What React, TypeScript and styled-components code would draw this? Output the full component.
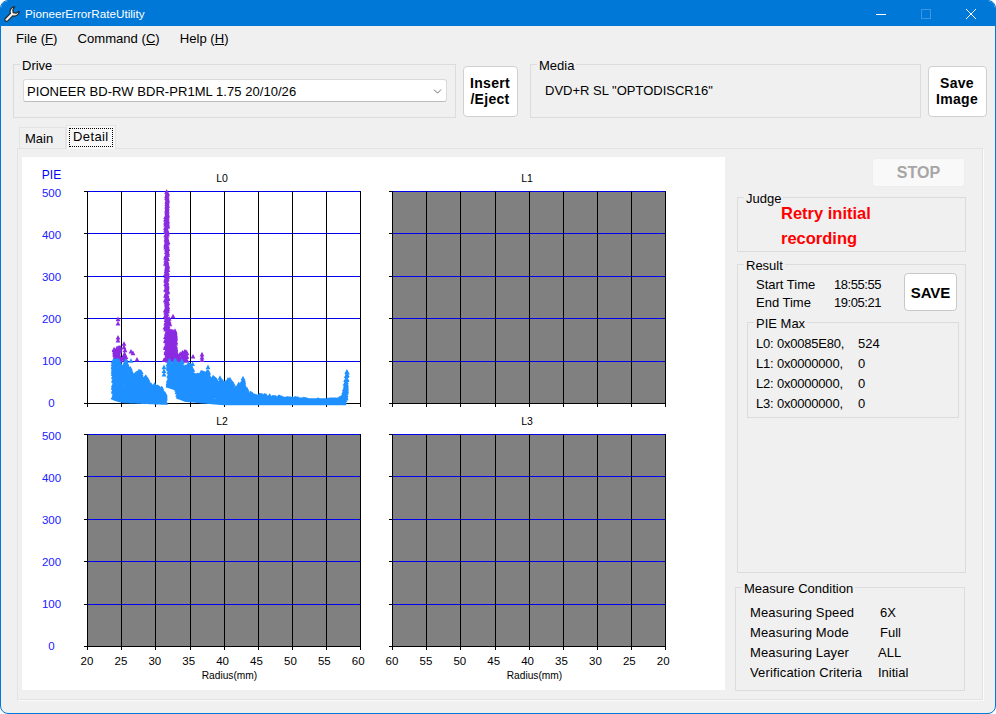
import React from 'react';
import styled, { createGlobalStyle } from 'styled-components';
import { ChevronDown } from 'lucide-react';

type Point = [number, number];

const PLOT_WIDTH = 273;
const PLOT_HEIGHT = 212;
const PLOT_Y = 23;
const V_LINES = [0, 34, 68, 103, 137, 171, 205, 239, 273];
const H_LINES = [0, 42, 85, 127, 170];
const Y_LABELS = [500, 400, 300, 200, 100, 0];
const RADIUS = [20, 25, 30, 35, 40, 45, 50, 55, 60];

// envelope of the measured values: [screen x, value]
const FIRST_HIGH: Point[] = [[113, 98], [119, 100], [122, 78], [126, 100], [129, 72], [130, 98], [133, 66], [137, 74], [147, 68], [153, 46], [163, 32], [165.5, 28]];
const FIRST_LOW: Point[] = [[113, 14], [118, 9], [125, 5], [165.5, 1]];
const SECOND_HIGH: Point[] = [[168, 100], [187, 100], [193, 90], [203, 82], [208, 78], [220, 52], [228, 58], [237, 38], [243, 58], [247, 28], [253, 21], [273, 15], [293, 11], [320, 7], [337, 8], [342, 14], [344, 36], [347, 88]];
const SECOND_LOW: Point[] = [[168, 42], [176, 36], [178, 16], [187, 8], [205, 4], [225, 0], [344, 0], [346, 14], [347, 40]];
const BLUE_EXTRA: Point[] = [[164, 85], [164, 76], [164, 68], [131, 100], [243, 54], [208, 85], [228, 56], [220, 60]];
const PURPLE_EXTRA: Point[] = [[118, 198], [118, 188], [118, 155], [118, 148], [117, 130], [119, 130], [124, 140], [124, 132], [125, 125], [131, 122], [133, 118], [137, 103], [173, 205], [193, 110], [202, 115], [202, 108], [202, 102], [164, 102], [187, 118], [185, 122]];

function lerp(table: Point[], x: number) {
  for (let i = 1; i < table.length; i += 1) {
    if (x <= table[i][0]) {
      const [x0, y0] = table[i - 1];
      const [x1, y1] = table[i];
      return y0 + ((y1 - y0) * (x - x0)) / (x1 - x0);
    }
  }
  return table[table.length - 1][1];
}

function createRandom(seed: number) {
  let s = seed;
  return () => {
    s = (s + 0x6d2b79f5) | 0;
    let t = Math.imul(s ^ (s >>> 15), 1 | s);
    t = (t + Math.imul(t ^ (t >>> 7), 61 | t)) ^ t;
    return ((t ^ (t >>> 14)) >>> 0) / 4294967296;
  };
}

function toPath(points: Point[]) {
  return points
    .map(([x, v]) => {
      const px = x - 87;
      const py = PLOT_HEIGHT - (Math.min(v, 500) / 500) * PLOT_HEIGHT;
      return `M${px.toFixed(1)} ${(py - 2.4).toFixed(1)}l2.4 4.6h-4.8z`;
    })
    .join('');
}

function buildSeries() {
  const random = createRandom(16);
  const blue: Point[] = [...BLUE_EXTRA];
  const purple: Point[] = [...PURPLE_EXTRA];

  const fillLobe = (high: Point[], low: Point[], from: number, to: number) => {
    let bump = 1;
    for (let x = from; x <= to; x += 0.6) {
      if (random() < 0.3) bump = 0.72 + random() * 0.32;
      const top = Math.min(lerp(high, x) * bump, 100);
      const bottom = lerp(low, x);
      const count = Math.ceil((top - bottom) / 6) + 1;
      for (let i = 0; i < count; i += 1) {
        blue.push([x + random() * 0.6, bottom + (top - bottom) * random()]);
      }
      blue.push([x, top], [x, bottom]);
    }
  };
  fillLobe(FIRST_HIGH, FIRST_LOW, 113, 165.5);
  fillLobe(SECOND_HIGH, SECOND_LOW, 168, 347);

  // the spike at radius 31-32 mm
  for (let v = 100; v <= 500; v += 1.6) {
    const left = v > 440 ? 166.6 : v > 200 ? 165.4 : 164.8;
    const right = v > 440 ? 167.6 : v > 200 ? 168 : 170;
    purple.push([left + (right - left) * random(), v]);
  }
  for (let i = 0; i < 260; i += 1) {
    purple.push([167 + random() * 9, 100 + random() * 70]);
  }
  for (let i = 0; i < 50; i += 1) {
    purple.push([176 + random() * 11, 100 + random() * 24 * random()]);
  }
  for (let i = 0; i < 50; i += 1) {
    purple.push([114 + random() * 7, 100 + random() * 32]);
  }
  for (let i = 0; i < 16; i += 1) {
    purple.push([123 + random() * 3, 100 + random() * 16]);
  }
  return { blue: toPath(blue), purple: toPath(purple) };
}

const series = buildSeries();

type ChartProps = {
  title: string;
  plotX: number;
  width: number;
  height: number;
  showValues?: boolean;
  showRadius?: boolean;
  reversed?: boolean;
  unit?: boolean;
  data?: boolean;
};

function Chart({ title, plotX, width, height, showValues, showRadius, reversed, unit, data }: ChartProps) {
  const labels = reversed ? [...RADIUS].reverse() : RADIUS;

  return (
    <svg width={width} height={height} style={{ display: 'block' }}>
      <text x={plotX + 135} y={PLOT_Y - 9} fontSize={10.5} textAnchor="middle" fill="#000">
        {title}
      </text>
      {unit && (
        <text x={21.5} y={PLOT_Y - 12} fontSize={12} textAnchor="middle" fill="#0000ff">
          PIE
        </text>
      )}
      {showValues &&
        Y_LABELS.map((value, i) => (
          <text key={value} x={21.5} y={PLOT_Y + i * 42 + 6} fontSize={11.5} textAnchor="middle" fill="#2020ff">
            {value}
          </text>
        ))}
      <g transform={`translate(${plotX} ${PLOT_Y})`} shapeRendering="crispEdges">
        {!data && <rect width={PLOT_WIDTH} height={PLOT_HEIGHT} fill="#808080" />}
        {H_LINES.map((y) => (
          <line key={y} x1={-3} x2={PLOT_WIDTH + 1} y1={y + 0.5} y2={y + 0.5} stroke="#0000f0" />
        ))}
        {H_LINES.map((y) => (
          <line key={y} x1={-3} x2={0} y1={y + 0.5} y2={y + 0.5} stroke="#000" />
        ))}
        <line x1={-3} x2={PLOT_WIDTH + 1} y1={PLOT_HEIGHT + 0.5} y2={PLOT_HEIGHT + 0.5} stroke="#000" />
        {V_LINES.map((x) => (
          <line key={x} x1={x + 0.5} x2={x + 0.5} y1={0} y2={PLOT_HEIGHT + 4} stroke="#000" />
        ))}
      </g>
      {data && (
        <g transform={`translate(${plotX} ${PLOT_Y})`}>
          <path d={series.purple} fill="#8a2be2" />
          <path d={series.blue} fill="#1e90ff" />
        </g>
      )}
      {showRadius &&
        labels.map((value, i) => (
          <text key={value} x={plotX + i * 33.9} y={PLOT_Y + PLOT_HEIGHT + 19} fontSize={11.5} textAnchor="middle" fill="#000">
            {value}
          </text>
        ))}
      {showRadius && (
        <text x={plotX + 142.5} y={PLOT_Y + PLOT_HEIGHT + 33} fontSize={10.2} textAnchor="middle" fill="#000">
          Radius(mm)
        </text>
      )}
    </svg>
  );
}

function App() {
  return (
    <>
      <GlobalStyle />
      <Window>
        <TitleBar>
          <svg width={16} height={16} viewBox="0 0 16 16">
            <path
              d="M10.8 .8A4.8 4.8 0 0 0 6.4 7.4L1.3 12.5A1.7 1.7 0 0 0 3.7 14.9L8.8 9.8A4.8 4.8 0 0 0 15.2 5.2L12 7.2 9.2 6.6 8.8 3.8Z"
              fill="#efefef"
              stroke="#222"
              strokeWidth={1.1}
              strokeLinejoin="round"
            />
          </svg>
          <TitleText>PioneerErrorRateUtility</TitleText>
          <WindowButtons>
            <svg width={10} height={10} viewBox="0 0 10 10">
              <line x1={0} x2={10} y1={5.5} y2={5.5} stroke="#fff" />
            </svg>
            <svg width={10} height={10} viewBox="0 0 10 10">
              <rect x={0.5} y={0.5} width={9} height={9} fill="none" stroke="#3d95df" />
            </svg>
            <svg width={10} height={10} viewBox="0 0 10 10">
              <path d="M0 0L10 10M10 0L0 10" stroke="#fff" fill="none" />
            </svg>
          </WindowButtons>
        </TitleBar>

        <MenuBar>
          <MenuItem>
            File (<u>F</u>)
          </MenuItem>
          <MenuItem>
            Command (<u>C</u>)
          </MenuItem>
          <MenuItem>
            Help (<u>H</u>)
          </MenuItem>
        </MenuBar>

        <TopRow>
          <Group $width={443} $height={54}>
            <GroupLabel>Drive</GroupLabel>
            <ComboBox>
              PIONEER BD-RW BDR-PR1ML 1.75 20/10/26
              <ChevronDown size={13} color="#505050" strokeWidth={1.5} />
            </ComboBox>
          </Group>
          <CommandButton $width={55}>
            Insert
            <br />
            /Eject
          </CommandButton>
          <Group $width={391} $height={54} $left={5}>
            <GroupLabel>Media</GroupLabel>
            <MediaText>DVD+R SL "OPTODISCR16"</MediaText>
          </Group>
          <CommandButton $width={59}>
            Save
            <br />
            Image
          </CommandButton>
        </TopRow>

        <TabStrip>
          <Tab>Main</Tab>
          <ActiveTab>
            <span>Detail</span>
          </ActiveTab>
        </TabStrip>

        <TabPanel>
          <ChartPanel>
            <Chart title="L0" plotX={57} width={345} height={243} showValues unit data />
            <Chart title="L1" plotX={17} width={300} height={243} />
            <Chart title="L2" plotX={57} width={345} height={274} showValues showRadius />
            <Chart title="L3" plotX={17} width={300} height={274} showRadius reversed />
          </ChartPanel>

          <SidePanel>
            <StopButton disabled>STOP</StopButton>

            <Group $width={229} $height={55} $top={10} $self="flex-end">
              <GroupLabel>Judge</GroupLabel>
              <JudgeText>Retry initial recording</JudgeText>
            </Group>

            <Group $width={229} $height={309} $top={12} $self="flex-end">
              <GroupLabel>Result</GroupLabel>
              <ResultHead>
                <TimeList>
                  <TimeRow>
                    <TimeLabel>Start Time</TimeLabel>
                    <TimeValue>18:55:55</TimeValue>
                  </TimeRow>
                  <TimeRow>
                    <TimeLabel>End Time</TimeLabel>
                    <TimeValue>19:05:21</TimeValue>
                  </TimeRow>
                </TimeList>
                <SaveButton>SAVE</SaveButton>
              </ResultHead>
              <PieBox>
                <GroupLabel>PIE Max</GroupLabel>
                <PieRow>
                  <PieAddress>L0: 0x0085E80,</PieAddress>
                  524
                </PieRow>
                <PieRow>
                  <PieAddress>L1: 0x0000000,</PieAddress>0
                </PieRow>
                <PieRow>
                  <PieAddress>L2: 0x0000000,</PieAddress>0
                </PieRow>
                <PieRow>
                  <PieAddress>L3: 0x0000000,</PieAddress>0
                </PieRow>
              </PieBox>
            </Group>

            <Group $width={230} $height={104} $top={14} $self="flex-start">
              <GroupLabel>Measure Condition</GroupLabel>
              <ConditionList>
                <PieRow>
                  <ConditionName $width={130}>Measuring Speed</ConditionName>
                  6X
                </PieRow>
                <PieRow>
                  <ConditionName $width={130}>Measuring Mode</ConditionName>
                  Full
                </PieRow>
                <PieRow>
                  <ConditionName $width={128}>Measuring Layer</ConditionName>
                  ALL
                </PieRow>
                <PieRow>
                  <ConditionName $width={128}>Verification Criteria</ConditionName>
                  Initial
                </PieRow>
              </ConditionList>
            </Group>
          </SidePanel>
        </TabPanel>
      </Window>
    </>
  );
}

const GlobalStyle = createGlobalStyle`
  html,
  body {
    margin: 0;
    background: #fff;
  }

  body {
    font-family: 'Liberation Sans', Arial, sans-serif;
    font-size: 13px;
    color: #000;
  }

  svg text {
    font-family: 'Liberation Sans', Arial, sans-serif;
  }
`;

const Window = styled.div`
  box-sizing: border-box;
  width: 996px;
  height: 714px;
  overflow: hidden;
  border: 1px solid #0078d7;
  border-radius: 8px;
  background: #f0f0f0;
`;

const TitleBar = styled.div`
  display: flex;
  align-items: center;
  height: 25px;
  padding-left: 3px;
  background: #0078d7;
`;

const TitleText = styled.div`
  margin-left: 5px;
  font-size: 11.7px;
  color: #fff;
`;

const WindowButtons = styled.div`
  display: flex;
  gap: 35px;
  margin-left: auto;
  margin-right: 19px;
`;

const MenuBar = styled.div`
  display: flex;
  gap: 20px;
  height: 24px;
  padding-left: 15px;
  line-height: 26px;
  font-size: 13.1px;
`;

const MenuItem = styled.div``;

const TopRow = styled.div`
  display: flex;
  align-items: flex-start;
  gap: 7px;
  margin-top: 14px;
  padding-left: 12px;
`;

const Group = styled.div<{ $width: number; $height: number; $top?: number; $left?: number; $self?: string }>`
  position: relative;
  box-sizing: border-box;
  flex: none;
  width: ${({ $width }) => $width}px;
  height: ${({ $height }) => $height}px;
  margin-top: ${({ $top }) => $top ?? 0}px;
  margin-left: ${({ $left }) => $left ?? 0}px;
  align-self: ${({ $self }) => $self ?? 'auto'};
  border: 1px solid #dcdcdc;
`;

const GroupLabel = styled.div`
  position: absolute;
  top: -7px;
  left: 6px;
  padding: 0 2px;
  background: #f0f0f0;
  line-height: 15px;
  white-space: nowrap;
`;

const ComboBox = styled.div`
  box-sizing: border-box;
  display: flex;
  align-items: center;
  justify-content: space-between;
  width: 424px;
  height: 23px;
  margin: 14px 0 0 9px;
  padding: 1px 2px 0 3px;
  border: 1px solid #d9d9d9;
  border-bottom-color: #bdbdbd;
  border-radius: 3px;
  background: #fff;
  letter-spacing: 0.05px;
`;

const MediaText = styled.div`
  padding: 17px 0 0 14px;
  line-height: 18px;
`;

const CommandButton = styled.button<{ $width: number }>`
  flex: none;
  width: ${({ $width }) => $width}px;
  height: 51px;
  margin-top: 2px;
  padding: 0 1px 2px 0;
  border: 1px solid #d0d0d0;
  border-radius: 4px;
  background: #fff;
  font-family: inherit;
  font-size: 14px;
  font-weight: bold;
  letter-spacing: 0.3px;
  line-height: 16px;
  color: #000;
`;

const TabStrip = styled.div`
  display: flex;
  align-items: flex-end;
  height: 23px;
  margin: 7px 0 0 18px;
`;

const Tab = styled.div`
  box-sizing: border-box;
  width: 47px;
  height: 21px;
  padding-left: 5px;
  border: 1px solid #e3e3e3;
  border-bottom: none;
  line-height: 21px;
`;

const ActiveTab = styled.div`
  box-sizing: border-box;
  width: 50px;
  height: 24px;
  margin-bottom: -1px;
  padding: 2px;
  border: 1px solid #e3e3e3;
  border-bottom: none;
  background: #f7f7f7;

  span {
    display: block;
    box-sizing: border-box;
    height: 19px;
    padding-left: 3px;
    border: 1px dotted #000;
    letter-spacing: 0.4px;
    line-height: 16px;
  }
`;

const TabPanel = styled.div`
  box-sizing: border-box;
  display: flex;
  width: 966px;
  height: 552px;
  margin-left: 16px;
  padding: 8px 0 0 4px;
  border: 1px solid #e3e3e3;
  box-shadow: 1px 1px 0 #fafafa;
`;

const ChartPanel = styled.div`
  box-sizing: border-box;
  display: grid;
  flex: none;
  grid-template-columns: 345px 300px;
  grid-template-rows: 243px 274px;
  align-content: start;
  width: 703px;
  height: 533px;
  padding: 11px 0 0 8px;
  background: #fff;
`;

const SidePanel = styled.div`
  display: flex;
  flex-direction: column;
  width: 231px;
  margin-left: 10px;
`;

const StopButton = styled.button`
  align-self: flex-end;
  width: 93px;
  height: 29px;
  margin: 1px 1px 0 0;
  padding: 0;
  border: 1px solid #ededed;
  border-radius: 3px;
  background: #f9f9f9;
  font-family: inherit;
  font-size: 16px;
  font-weight: bold;
  color: #a6a6a6;
`;

const JudgeText = styled.div`
  width: 110px;
  padding: 3px 0 0 43px;
  font-size: 16.5px;
  font-weight: bold;
  line-height: 25px;
  color: #ff0000;
`;

const ResultHead = styled.div`
  display: flex;
  justify-content: space-between;
  padding: 8px 8px 0 18px;
`;

const TimeList = styled.div`
  padding-top: 3px;
`;

const TimeRow = styled.div`
  display: flex;
  line-height: 17.5px;
`;

const TimeLabel = styled.div`
  width: 78px;
`;

const TimeValue = styled.div`
  letter-spacing: -0.45px;
`;

const SaveButton = styled.button`
  width: 53px;
  height: 38px;
  padding: 0;
  border: 1px solid #c8c8c8;
  border-radius: 4px;
  background: #fff;
  font-family: inherit;
  font-size: 15px;
  font-weight: bold;
  color: #000;
`;

const PieBox = styled.div`
  position: relative;
  box-sizing: border-box;
  width: 212px;
  height: 96px;
  margin: 11px 0 0 9px;
  padding: 11px 0 0 8px;
  border: 1px solid #dcdcdc;
`;

const PieRow = styled.div`
  display: flex;
  line-height: 20px;
`;

const PieAddress = styled.div`
  width: 102px;
  letter-spacing: -0.2px;
`;

const ConditionList = styled.div`
  padding: 15px 0 0 14px;
`;

const ConditionName = styled.div<{ $width: number }>`
  width: ${({ $width }) => $width}px;
  letter-spacing: 0.15px;
`;

export default App;
